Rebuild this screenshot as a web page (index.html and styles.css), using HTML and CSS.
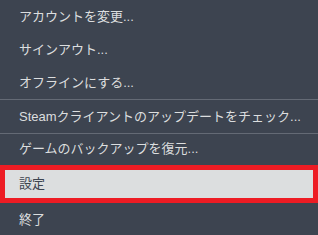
FILE: index.html
```html
<!DOCTYPE html>
<html lang="ja">
<head>
    <meta charset="UTF-8">
    <meta name="viewport" content="width=device-width, initial-scale=1.0">
    <title>Steam Menu</title>
    <link rel="stylesheet" href="styles.css">
</head>
<body>
    <div class="menu">
        <div class="item">アカウントを変更...</div>
        <div class="item">サインアウト...</div>
        <div class="item">オフラインにする...</div>
        <div class="divider"></div>
        <div class="item">Steamクライアントのアップデートをチェック...</div>
        <div class="divider"></div>
        <div class="item short">ゲームのバックアップを復元...</div>
        <div class="item selected">設定</div>
        <div class="item">終了</div>
    </div>
</body>
</html>
```

FILE: styles.css
```css
body {
    margin: 0;
    background-color: #3d4450;
    font-family: "Liberation Sans", "Noto Sans CJK JP", sans-serif;
}

.menu {
    width: 318px;
    height: 235px;
    overflow: hidden;
    background-color: #3d4450;
}

.item {
    height: 33px;
    line-height: 33px;
    padding-left: 19px;
    font-size: 13px;
    color: #dcdedf;
    white-space: nowrap;
}

.item.short {
    height: 31px;
    line-height: 29px;
}

.divider {
    height: 1px;
    background-color: #646a75;
}

/* highlighted entry with the red marker box */
.item.selected {
    height: 38px;
    line-height: 37px;
    background-color: #dcdedf;
    color: #3d4450;
    box-shadow: inset 0 0 0 5px #ed1c24;
}
```
